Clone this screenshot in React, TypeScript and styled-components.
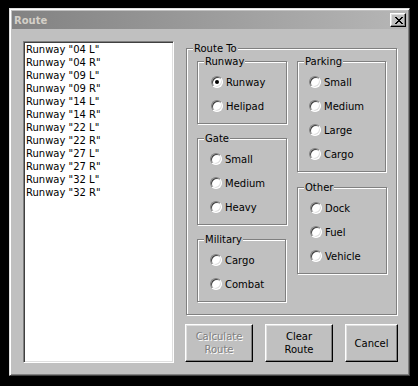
import React from 'react'
import styled, { createGlobalStyle } from 'styled-components'

const GlobalStyle = createGlobalStyle`
  body {
    margin: 0;
    background: #000;
    font-family: "DejaVu Sans", "Liberation Sans", sans-serif;
  }
`

const runways = ['04 L', '04 R', '09 L', '09 R', '14 L', '14 R', '22 L', '22 R', '27 L', '27 R', '32 L', '32 R']

export default function App() {
  return (
    <>
      <GlobalStyle />
      <Window>
        <TitleBar>
          <TitleText>Route</TitleText>
          <CloseButton>
            <svg width="8" height="7" viewBox="0 0 8 7" shapeRendering="crispEdges">
              <path d="M0 0h2v1H0zM6 0h2v1H6zM1 1h2v1H1zM5 1h2v1H5zM2 2h4v1H2zM3 3h2v1H3zM2 4h4v1H2zM1 5h2v1H1zM5 5h2v1H5zM0 6h2v1H0zM6 6h2v1H6z" fill="#000" />
            </svg>
          </CloseButton>
        </TitleBar>
        <Content>
          <ListBox>
            {runways.map((r) => (
              <ListItem key={r}>Runway "{r}"</ListItem>
            ))}
          </ListBox>
          <RightCol>
            <RouteTo>
              <Caption>Route To</Caption>
              <Column $gap={14}>
                <Group $w={90} $indent={13}>
                  <Caption>Runway</Caption>
                  <Radio label="Runway" checked />
                  <Radio label="Helipad" />
                </Group>
                <Group $w={90} $indent={12}>
                  <Caption>Gate</Caption>
                  <Radio label="Small" />
                  <Radio label="Medium" />
                  <Radio label="Heavy" />
                </Group>
                <Group $w={89} $indent={12}>
                  <Caption>Military</Caption>
                  <Radio label="Cargo" />
                  <Radio label="Combat" />
                </Group>
              </Column>
              <Column $gap={15}>
                <Group $w={89} $indent={11}>
                  <Caption>Parking</Caption>
                  <Radio label="Small" />
                  <Radio label="Medium" />
                  <Radio label="Large" />
                  <Radio label="Cargo" />
                </Group>
                <Group $w={90} $indent={12}>
                  <Caption>Other</Caption>
                  <Radio label="Dock" />
                  <Radio label="Fuel" />
                  <Radio label="Vehicle" />
                </Group>
              </Column>
            </RouteTo>
            <ButtonRow>
              <Button $w={68} disabled>Calculate<br />Route</Button>
              <Button $w={68}>Clear<br />Route</Button>
              <Button $w={53}>Cancel</Button>
            </ButtonRow>
          </RightCol>
        </Content>
      </Window>
    </>
  )
}

function Radio({ label, checked }: { label: string; checked?: boolean }) {
  return (
    <RadioRow>
      <RadioCircle $on={!!checked} />
      <span>{label}</span>
    </RadioRow>
  )
}

const Window = styled.div`
  box-sizing: border-box;
  width: 401px;
  height: 368px;
  margin: 8px 0 0 9px;
  background: #c0c0c0;
  border: 1px solid;
  border-color: #dfdfdf #404040 #404040 #dfdfdf;
  box-shadow: inset 1px 1px 0 #fff, inset -1px -1px 0 #808080;
  padding: 2px;
  display: flex;
  flex-direction: column;
`

const TitleBar = styled.div`
  height: 18px;
  background: linear-gradient(to right, #828282, #b6b6b6);
  display: flex;
  align-items: center;
  justify-content: space-between;
  padding: 0 1px 0 2px;
`

const TitleText = styled.span`
  color: #d4d0c8;
  font-weight: bold;
  font-size: 10px;
`

const CloseButton = styled.div`
  box-sizing: border-box;
  width: 16px;
  height: 14px;
  background: #c0c0c0;
  border: 1px solid;
  border-color: #fff #000 #000 #fff;
  box-shadow: inset -1px -1px 0 #808080, inset 1px 1px 0 #dfdfdf;
  display: flex;
  align-items: center;
  justify-content: center;
  padding-left: 1px;
`

const Content = styled.div`
  display: flex;
  padding: 12px 0 0 11px;
`

const ListBox = styled.div`
  box-sizing: border-box;
  width: 151px;
  height: 322px;
  background: #fff;
  border: 1px solid;
  border-color: #808080 #fff #fff #808080;
  box-shadow: inset 1px 1px 0 #404040, inset -1px -1px 0 #dfdfdf;
  padding: 1px 0 0 2px;
`

const ListItem = styled.div`
  height: 13px;
  line-height: 13px;
  font-size: 10px;
  color: #000;
  white-space: nowrap;
`

const RightCol = styled.div`
  display: flex;
  flex-direction: column;
  margin-left: 11px;
  padding-top: 7px;
`

const RouteTo = styled.div`
  position: relative;
  box-sizing: border-box;
  width: 211px;
  height: 267px;
  margin-left: 1px;
  border: 1px solid #808080;
  box-shadow: 1px 1px 0 #fff, inset 1px 1px 0 #fff;
  padding: 12px 0 0 10px;
  display: flex;
  gap: 10px;
`

const Column = styled.div<{ $gap: number }>`
  display: flex;
  flex-direction: column;
  gap: ${(p) => p.$gap}px;
`

const Group = styled.div<{ $w: number; $indent: number }>`
  position: relative;
  box-sizing: border-box;
  width: ${(p) => p.$w}px;
  border: 1px solid #808080;
  box-shadow: 1px 1px 0 #fff, inset 1px 1px 0 #fff;
  padding: 8px 0 5px ${(p) => p.$indent}px;
`

const Caption = styled.span`
  position: absolute;
  top: -7px;
  left: 6px;
  padding: 0 1px;
  background: #c0c0c0;
  font-size: 10px;
  line-height: 13px;
  color: #000;
`

const RadioRow = styled.div`
  height: 24px;
  display: flex;
  align-items: center;
  gap: 3px;
  font-size: 10px;
  color: #000;
`

const RadioCircle = styled.span<{ $on: boolean }>`
  position: relative;
  box-sizing: border-box;
  width: 12px;
  height: 12px;
  border-radius: 50%;
  background: #fff;
  border: 1px solid;
  border-color: #808080 #fff #fff #808080;
  box-shadow: inset 1px 1px 0 #404040, inset -1px -1px 0 #dfdfdf;
  &::after {
    content: '';
    display: ${(p) => (p.$on ? 'block' : 'none')};
    position: absolute;
    left: 3px;
    top: 3px;
    width: 4px;
    height: 4px;
    border-radius: 50%;
    background: #000;
  }
`

const ButtonRow = styled.div`
  display: flex;
  gap: 12px;
  margin-top: 9px;
`

const Button = styled.button<{ $w: number }>`
  box-sizing: border-box;
  width: ${(p) => p.$w}px;
  height: 38px;
  padding: 0;
  background: #c0c0c0;
  border: 1px solid;
  border-color: #fff #000 #000 #fff;
  box-shadow: inset -1px -1px 0 #808080, inset 1px 1px 0 #dfdfdf;
  font-family: "DejaVu Sans", "Liberation Sans", sans-serif;
  font-size: 10px;
  line-height: 13px;
  color: #000;
  &:disabled {
    color: #808080;
    text-shadow: 1px 1px 0 #fff;
  }
`
